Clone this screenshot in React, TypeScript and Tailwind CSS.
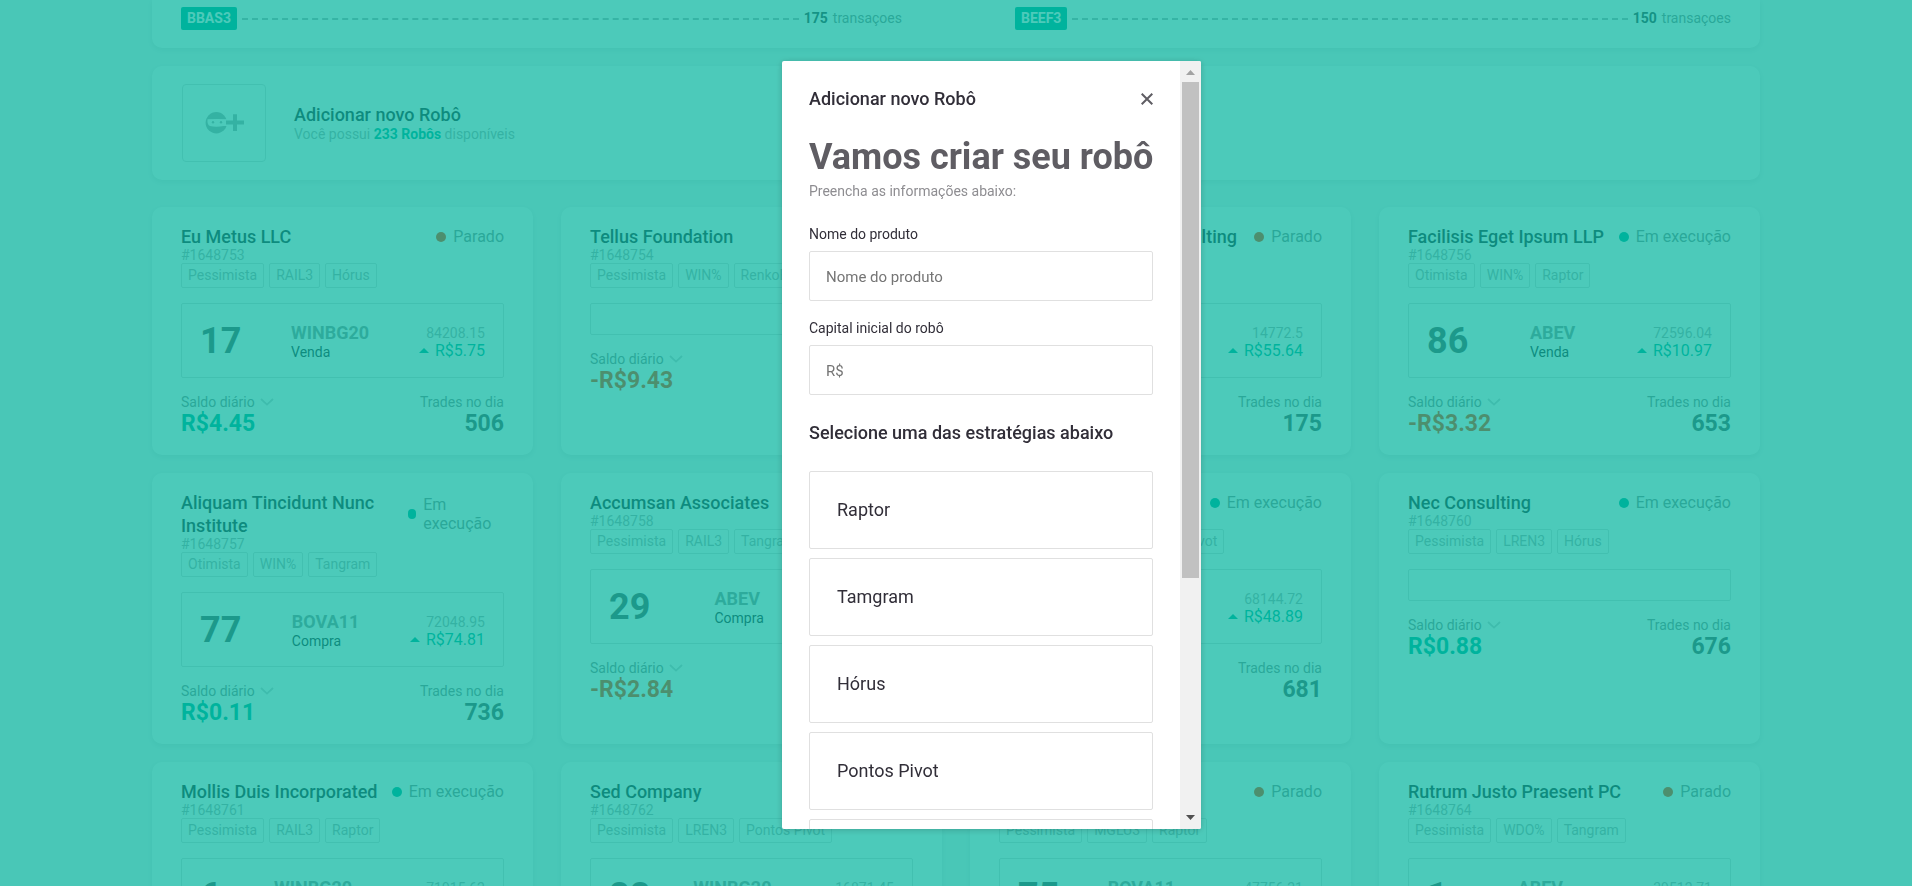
import React from "react";

type Robot = {
  name: string;
  id: string;
  running: boolean;
  tags: string[];
  order?: { count: string; asset: string; side: string; price: string; delta: string };
  balance: string;
  trades: string;
};

const robots: Robot[] = [
  { name: "Eu Metus LLC", id: "#1648753", running: false, tags: ["Pessimista", "RAIL3", "Hórus"], order: { count: "17", asset: "WINBG20", side: "Venda", price: "84208.15", delta: "R$5.75" }, balance: "R$4.45", trades: "506" },
  { name: "Tellus Foundation", id: "#1648754", running: false, tags: ["Pessimista", "WIN%", "RenkoBox"], balance: "-R$9.43", trades: "412" },
  { name: "Malesuada Fames Consulting", id: "#1648755", running: false, tags: ["Otimista", "WIN%", "Hórus"], order: { count: "52", asset: "ABEV", side: "Venda", price: "14772.5", delta: "R$55.64" }, balance: "R$2.10", trades: "175" },
  { name: "Facilisis Eget Ipsum LLP", id: "#1648756", running: true, tags: ["Otimista", "WIN%", "Raptor"], order: { count: "86", asset: "ABEV", side: "Venda", price: "72596.04", delta: "R$10.97" }, balance: "-R$3.32", trades: "653" },
  { name: "Aliquam Tincidunt Nunc Institute", id: "#1648757", running: true, tags: ["Otimista", "WIN%", "Tangram"], order: { count: "77", asset: "BOVA11", side: "Compra", price: "72048.95", delta: "R$74.81" }, balance: "R$0.11", trades: "736" },
  { name: "Accumsan Associates", id: "#1648758", running: true, tags: ["Pessimista", "RAIL3", "Tangram"], order: { count: "29", asset: "ABEV", side: "Compra", price: "30122.4", delta: "R$8.12" }, balance: "-R$2.84", trades: "318" },
  { name: "Fusce Limited", id: "#1648759", running: true, tags: ["Otimista", "WDO%", "Pontos Pivot"], order: { count: "41", asset: "ABEV", side: "Venda", price: "68144.72", delta: "R$48.89" }, balance: "R$1.07", trades: "681" },
  { name: "Nec Consulting", id: "#1648760", running: true, tags: ["Pessimista", "LREN3", "Hórus"], balance: "R$0.88", trades: "676" },
  { name: "Mollis Duis Incorporated", id: "#1648761", running: true, tags: ["Pessimista", "RAIL3", "Raptor"], order: { count: "6", asset: "WINBG20", side: "Venda", price: "71915.62", delta: "-R$20.31" }, balance: "R$3.40", trades: "204" },
  { name: "Sed Company", id: "#1648762", running: true, tags: ["Pessimista", "LREN3", "Pontos Pivot"], order: { count: "88", asset: "WINBG20", side: "Venda", price: "16871.45", delta: "-R$12.64" }, balance: "R$5.02", trades: "590" },
  { name: "Arcu Limited", id: "#1648763", running: false, tags: ["Pessimista", "MGLU3", "Raptor"], order: { count: "75", asset: "BOVA11", side: "Compra", price: "47756.21", delta: "-R$33.18" }, balance: "R$6.21", trades: "127" },
  { name: "Rutrum Justo Praesent PC", id: "#1648764", running: false, tags: ["Pessimista", "WDO%", "Tangram"], order: { count: "1", asset: "ABEV", side: "Compra", price: "39512.71", delta: "R$61.90" }, balance: "R$7.13", trades: "845" },
];

const strategies = ["Raptor", "Tamgram", "Hórus", "Pontos Pivot", "RenkoBox"];

function Asset({ code, count }: { code: string; count: string }) {
  return (
    <div className="flex items-center text-[14px] leading-[17px]">
      <span className="rounded-xs bg-[#00b39d] px-[6px] py-[3px] font-bold text-white">{code}</span>
      <span className="mx-[5px] flex-1 border-t-2 border-dashed border-[#b4b4b7]" />
      <span className="font-bold text-[#49474e]">{count}</span>
      <span className="ml-[5px] text-[#8e8d91]">transaçoes</span>
    </div>
  );
}

function RobotCard({ robot }: { robot: Robot }) {
  const { order } = robot;
  const positive = !robot.balance.startsWith("-");
  return (
    <article className="rounded-[10px] bg-white px-[29px] py-[18px] shadow-[0_2px_6px_rgba(0,0,0,0.08)]">
      <header className="flex items-center justify-between">
        <h3 className="text-[18px] leading-[23px] font-medium text-[#312e38]">{robot.name}</h3>
        <div className="flex items-center text-[16px] leading-[19px] text-[#8e8d91]">
          <span className={`mr-[7px] h-[10px] w-[10px] rounded-full ${robot.running ? "bg-[#00b39d]" : "bg-[#ff3b00]"}`} />
          <span>{robot.running ? "Em execução" : "Parado"}</span>
        </div>
      </header>
      <p className="text-[14px] leading-[15px] text-[#b0afb3]">{robot.id}</p>
      <ul className="flex gap-[5px] text-[14px] leading-[17px] text-[#b0afb3]">
        {robot.tags.map((tag) => (
          <li key={tag} className="rounded-xs border border-[#dcdcde] px-[6px] py-[3px] whitespace-nowrap">{tag}</li>
        ))}
      </ul>
      <div className="mt-[15px] flex items-center justify-between rounded-xs border border-[#dcdcde] px-[18px] pt-[16px] pb-[14px]">
        {order && (
          <>
            <strong className="text-[36px] leading-[43px] font-bold text-[#5f5d63]">{order.count}</strong>
            <div>
              <p className="text-[18px] leading-[22px] font-bold text-[#98979b]">{order.asset}</p>
              <p className="text-[14px] leading-[17px] text-[#312e38]">{order.side}</p>
            </div>
            <div className="text-right">
              <p className="text-[14px] leading-[17px] text-[#b0afb3]">{order.price}</p>
              <p className="flex items-center justify-end gap-[6px] text-[16px] leading-[17px] text-[#00b39d]">
                <svg width="10" height="5" viewBox="0 0 10 5" fill="currentColor" aria-hidden="true">
                  <path d="M5 0L10 5H0Z" />
                </svg>
                {order.delta}
              </p>
            </div>
          </>
        )}
      </div>
      <footer className="mt-[15px] flex justify-between">
        <div>
          <button type="button" className="flex items-center gap-[5px] text-[14px] leading-[18px] text-[#8e8d91]">
            Saldo diário
            <svg width="14" height="8" viewBox="0 0 14 8" fill="none" stroke="#d0d0d2" strokeWidth="1.8" aria-hidden="true">
              <path d="M1 1l6 5.6L13 1" />
            </svg>
          </button>
          <p className={`text-[23px] leading-[26px] font-bold ${positive ? "text-[#00b39d]" : "text-[#ff3b00]"}`}>{robot.balance}</p>
        </div>
        <div className="text-right">
          <p className="text-[14px] leading-[18px] text-[#8e8d91]">Trades no dia</p>
          <p className="text-[23px] leading-[26px] font-bold text-[#5f5d63]">{robot.trades}</p>
        </div>
      </footer>
    </article>
  );
}

function Field({ id, label, placeholder }: { id: string; label: string; placeholder: string }) {
  return (
    <div>
      <label htmlFor={id} className="block text-[14px] leading-[17px] text-[#312e38]">{label}</label>
      <input
        id={id}
        type="text"
        placeholder={placeholder}
        className="mt-[8px] block h-[50px] w-full rounded-xs border border-[#e0e0e0] px-4 pt-px text-[15px] text-[#312e38] outline-none placeholder:text-[#757575]"
      />
    </div>
  );
}

function NewRobotDialog() {
  return (
    <div className="fixed inset-0 flex justify-center bg-[#00b39d]/70 pt-[61px] pb-[57px] pl-[71px]">
      <div role="dialog" aria-modal="true" aria-labelledby="dialog-title" className="flex h-full overflow-hidden rounded-xs bg-white shadow-[0_1px_6px_rgba(0,0,0,0.2)]">
        <div className="w-[398px] overflow-hidden p-[27px]">
          <div className="flex items-center justify-between">
            <h2 id="dialog-title" className="text-[18px] leading-[22px] font-medium text-[#312e38]">Adicionar novo Robô</h2>
            <button type="button" aria-label="Fechar" className="text-[#5f5d63]">
              <svg width="12" height="12" viewBox="0 0 12 12" fill="none" stroke="currentColor" strokeWidth="2" aria-hidden="true">
                <path d="M.7.7l10.6 10.6M11.3.7L.7 11.3" />
              </svg>
            </button>
          </div>
          <h1 className="mt-[26px] text-[36px] leading-[43px] font-bold whitespace-nowrap text-[#5f5d63]">Vamos criar seu robô</h1>
          <p className="mt-[4px] text-[14px] leading-[17px] text-[#8e8d91]">Preencha as informações abaixo:</p>
          <form className="mt-[26px]">
            <div className="flex flex-col gap-[19px]">
              <Field id="robot-name" label="Nome do produto" placeholder="Nome do produto" />
              <Field id="robot-capital" label="Capital inicial do robô" placeholder="R$" />
            </div>
            <h2 className="my-[27px] text-[18px] leading-[22px] font-medium text-[#312e38]">Selecione uma das estratégias abaixo</h2>
            <div className="flex flex-col gap-[9px]">
              {strategies.map((name) => (
                <button key={name} type="button" className="rounded-xs border border-[#e0e0e0] p-[27px] text-left text-[18px] leading-[22px] text-[#312e38]">
                  {name}
                </button>
              ))}
            </div>
          </form>
        </div>
        <div className="flex w-[21px] flex-col items-center bg-[#f1f1f1]" aria-hidden="true">
          <svg width="21" height="21" viewBox="0 0 21 21" fill="#a3a3a3"><path d="M10.500 9L15 14H6Z" /></svg>
          <div className="h-[496px] w-[17px] bg-[#c1c1c1]" />
          <svg className="mt-auto" width="21" height="21" viewBox="0 0 21 21" fill="#505050"><path d="M6 7H15L10.500 12Z" /></svg>
        </div>
      </div>
    </div>
  );
}

export default function App() {
  return (
    <div className="h-screen overflow-hidden bg-[#f4f4f5] font-['Roboto',sans-serif]">
      <main className="mx-auto w-full max-w-[1608px]">
        <section className="grid grid-cols-[721fr_716fr] gap-[113px] rounded-b-[10px] bg-white px-[29px] pt-[7px] pb-[18px] shadow-[0_2px_6px_rgba(0,0,0,0.08)]">
          <Asset code="BBAS3" count="175" />
          <Asset code="BEEF3" count="150" />
        </section>
        <section className="mt-[18px] flex items-center gap-[28px] rounded-[10px] bg-white px-[30px] py-[18px] shadow-[0_2px_6px_rgba(0,0,0,0.08)]">
          <button type="button" aria-label="Adicionar robô" className="flex h-[78px] w-[84px] items-center justify-center rounded-[4px] border border-[#dcdcde]">
            <svg width="40" height="22" viewBox="0 0 40 22" fill="#b0afb3" aria-hidden="true">
              <circle cx="12.300" cy="10.700" r="10.700" />
              <path fill="#fff" d="M3.500 7.300Q12.500 6.600 23.500 7.300V14H19.500Q12 15.500 6 14Q3 13 3.500 7.300Z" />
              <circle cx="9" cy="10.200" r="1.200" />
              <circle cx="17" cy="10.200" r="1.200" />
              <path stroke="#fff" strokeWidth="1.600" paintOrder="stroke" d="M29 2.300H33V8.600H40V12.600H33V19H29V12.600H22V8.600H29Z" />
            </svg>
          </button>
          <div>
            <h2 className="text-[18px] leading-[22px] font-medium text-[#312e38]">Adicionar novo Robô</h2>
            <p className="text-[14px] leading-[17px] text-[#b0afb3]">
              Você possui <strong className="font-bold text-[#00b39d]">233 Robôs</strong> disponíveis
            </p>
          </div>
        </section>
        <div className="mt-[27px] grid grid-cols-4 gap-x-[28px] gap-y-[18px]">
          {robots.map((robot) => (
            <RobotCard key={robot.id} robot={robot} />
          ))}
        </div>
      </main>
      <NewRobotDialog />
    </div>
  );
}
